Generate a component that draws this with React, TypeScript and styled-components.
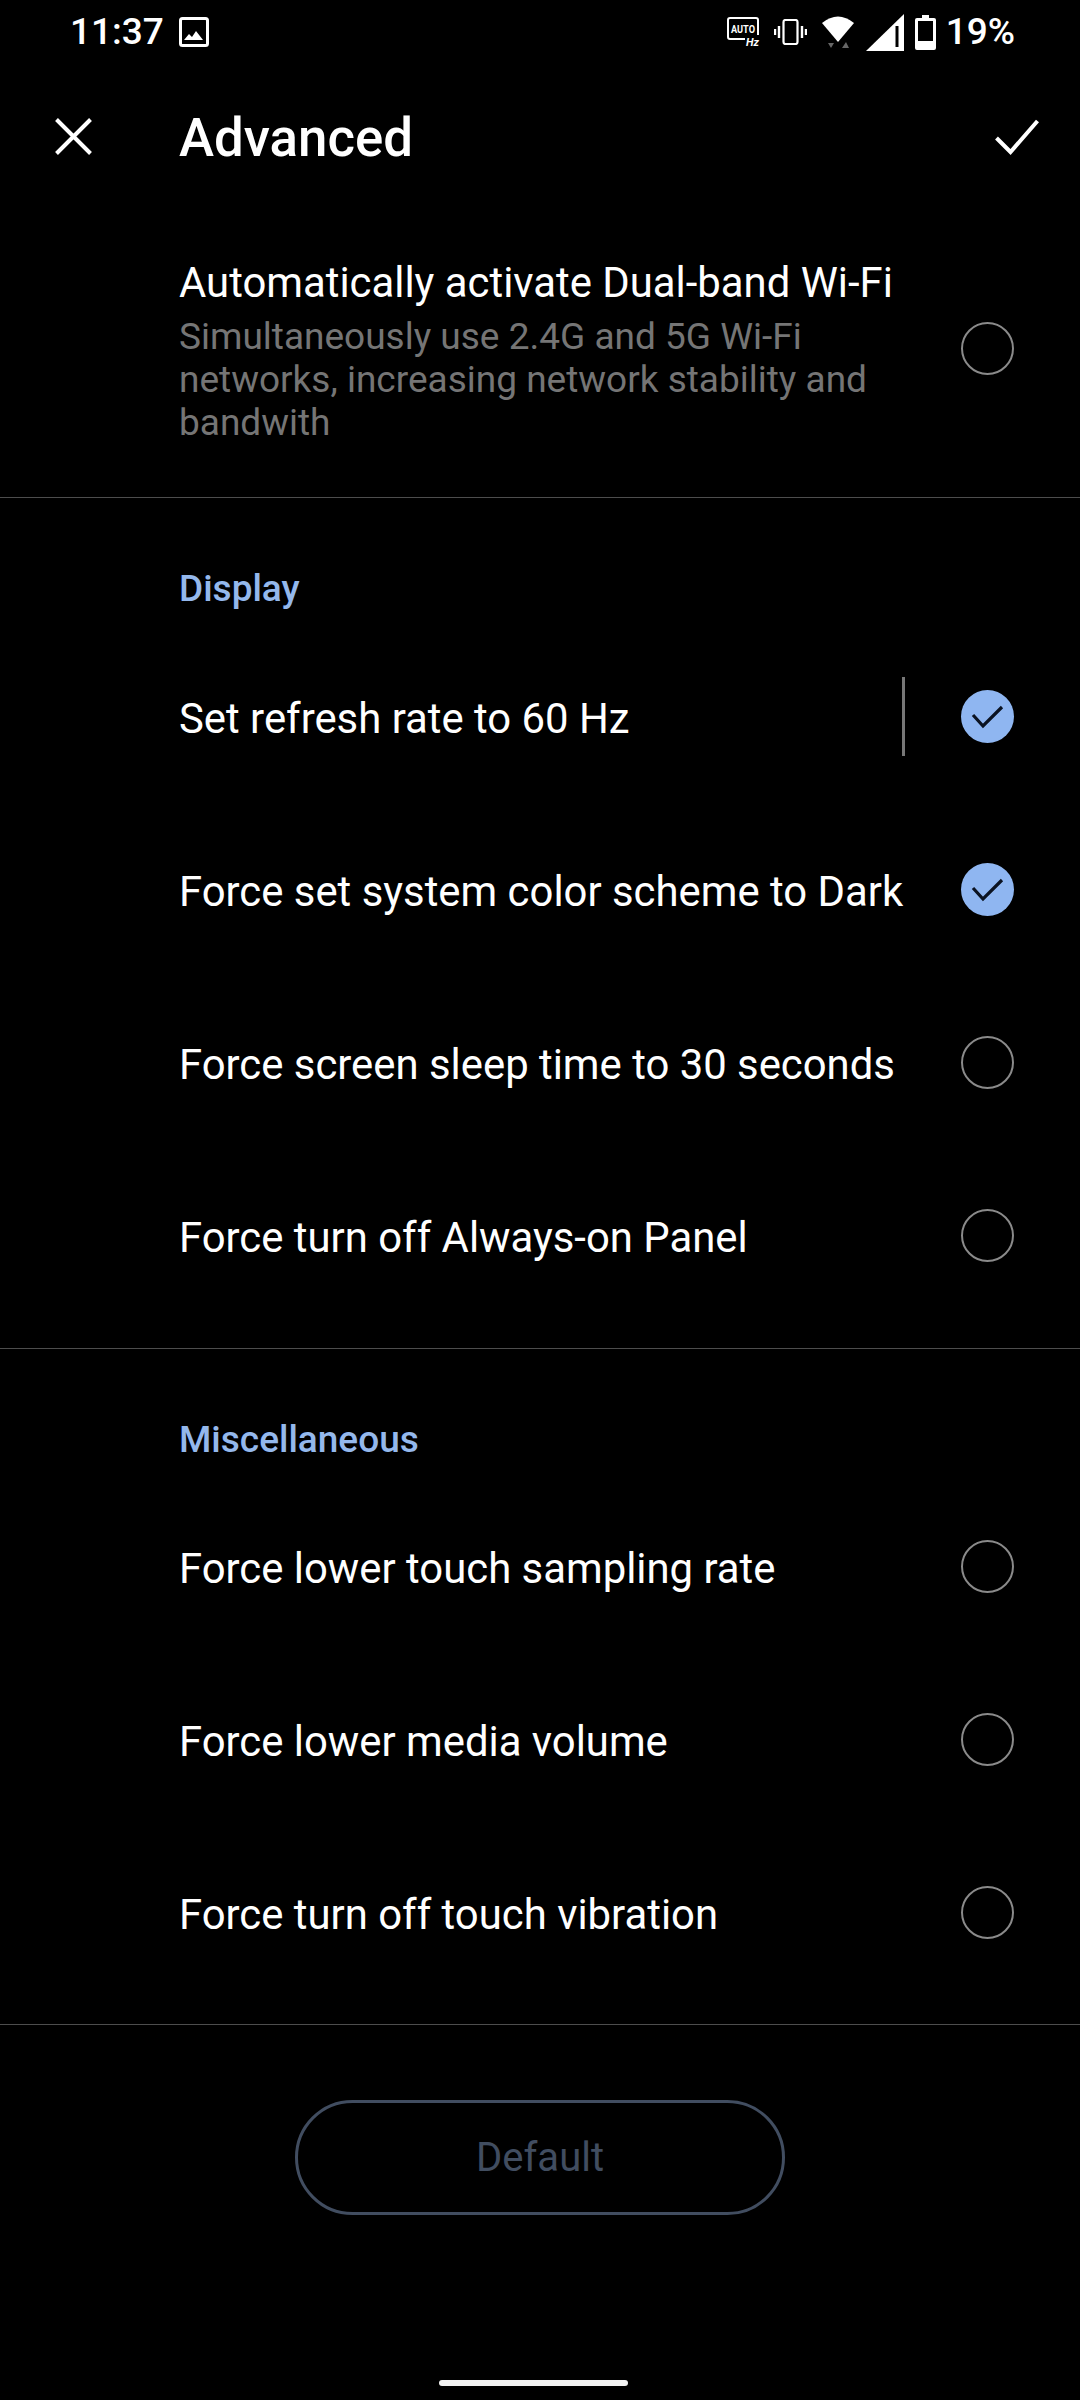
import styled, { createGlobalStyle } from "styled-components";

const GlobalStyle = createGlobalStyle`
  html, body {
    margin: 0;
    padding: 0;
    background: #000;
  }
  * {
    box-sizing: border-box;
  }
`;

const Screen = styled.div`
  width: 1080px;
  height: 2400px;
  background: #000;
  color: #fff;
  font-family: Roboto, "Liberation Sans", sans-serif;
  overflow: hidden;
`;

const StatusBar = styled.div`
  height: 64px;
  padding: 0 65px 0 70px;
  display: flex;
  align-items: center;
  justify-content: space-between;
`;

const StatusGroup = styled.div`
  display: flex;
  align-items: center;
`;

const StatusText = styled.span<{ $left?: number }>`
  margin-left: ${(p) => p.$left ?? 0}px;
  font-size: 37px;
  font-weight: 500;
  line-height: 64px;
`;

const StatusIcon = styled.svg<{ $left: number }>`
  display: block;
  margin-left: ${(p) => p.$left}px;
`;

const Toolbar = styled.div`
  height: 148px;
  display: flex;
  align-items: center;
`;

const ToolbarIcon = styled.svg<{ $left: number; $right?: number }>`
  display: block;
  margin-left: ${(p) => p.$left}px;
  margin-right: ${(p) => p.$right ?? 0}px;
  margin-bottom: 3px;
`;

const Title = styled.h1`
  margin: 0 0 0 87px;
  flex: 1;
  font-size: 52.8px;
  font-weight: 500;
  line-height: 60px;
`;

const FirstOption = styled.div`
  height: 285px;
  padding: 37px 66px 0 179px;
  display: flex;
  align-items: flex-start;
  justify-content: space-between;
`;

const FirstText = styled.div`
  width: 760px;
`;

const OptionTitle = styled.div`
  font-size: 41.85px;
  line-height: 60px;
  padding-top: 4px;
`;

const OptionHint = styled.div`
  margin-top: 2px;
  font-size: 37px;
  line-height: 43px;
  color: #757575;
`;

const Divider = styled.div`
  height: 1px;
  background: #4d4d4d;
`;

const Section = styled.div<{ $height: number }>`
  height: ${(p) => p.$height}px;
`;

const SectionLabel = styled.div<{ $height: number }>`
  height: ${(p) => p.$height}px;
  padding: 70px 0 0 179px;
  font-size: 37px;
  font-weight: 500;
  line-height: 42px;
  color: #94b8ec;
`;

const Row = styled.div`
  height: 173px;
  padding: 0 66px 0 179px;
  display: flex;
  align-items: center;
  justify-content: space-between;
`;

const RowEnd = styled.div`
  display: flex;
  align-items: center;
`;

const RowSeparator = styled.div`
  width: 3px;
  height: 79px;
  margin-right: 56px;
  background: #777;
`;

const Radio = styled.div<{ $checked: boolean }>`
  flex: none;
  width: 53px;
  height: 53px;
  border-radius: 50%;
  border: ${(p) => (p.$checked ? "none" : "2px solid #8a8a8a")};
  background: ${(p) => (p.$checked ? "#8fb6f1" : "transparent")};
  display: flex;
  align-items: center;
  justify-content: center;
`;

const FirstRadio = styled.div`
  margin-top: 73px;
`;

const Footer = styled.div`
  padding: 75px 0 0 295px;
`;

const DefaultButton = styled.div`
  width: 490px;
  height: 115px;
  border: 3px solid #414d60;
  border-radius: 58px;
  display: flex;
  align-items: center;
  justify-content: center;
  font-size: 40px;
  color: #414d60;
`;

const HomeBar = styled.div`
  width: 189px;
  height: 6px;
  margin: 165px 0 0 144px;
  border-radius: 3px;
  background: #f2f2f2;
`;

const Check = () => (
  <svg width="53" height="53" viewBox="0 0 53 53" fill="none">
    <path d="M12 25l10 11 19-19" stroke="#0b1322" strokeWidth="3.2" />
  </svg>
);

const Option = ({
  label,
  checked = false,
  separator = false,
}: {
  label: string;
  checked?: boolean;
  separator?: boolean;
}) => (
  <Row>
    <OptionTitle>{label}</OptionTitle>
    <RowEnd>
      {separator && <RowSeparator />}
      <Radio $checked={checked}>{checked && <Check />}</Radio>
    </RowEnd>
  </Row>
);

export default function App() {
  return (
    <Screen>
      <GlobalStyle />
      <StatusBar>
        <StatusGroup>
          <StatusText>11:37</StatusText>
          <StatusIcon $left={15} width="30" height="30" viewBox="0 0 30 30" fill="none">
            <rect x="1.5" y="1.5" width="27" height="27" rx="2" stroke="#fff" strokeWidth="3" />
            <path d="M5 23l5-6 3 3 4-6 7 9z" fill="#fff" />
          </StatusIcon>
        </StatusGroup>
        <StatusGroup>
          <StatusIcon $left={0} width="34" height="30" viewBox="0 0 34 30" fill="none">
            <path d="M2 20V3a2 2 0 0 1 2-2h26a2 2 0 0 1 2 2v15M2 20a2 2 0 0 0 2 2h15" stroke="#fff" strokeWidth="2" />
            <text x="5" y="16" fill="#fff" fontSize="10" fontWeight="700" textLength="24" lengthAdjust="spacingAndGlyphs" fontFamily="Roboto, sans-serif">AUTO</text>
            <text x="20" y="29" fill="#fff" fontSize="10" fontWeight="700" fontStyle="italic" textLength="13" lengthAdjust="spacingAndGlyphs" fontFamily="Roboto, sans-serif">Hz</text>
          </StatusIcon>
          <StatusIcon $left={14} width="33" height="26" viewBox="0 0 33 26" fill="none">
            <rect x="9.5" y="1" width="14" height="24" rx="2" stroke="#fff" strokeWidth="2.2" />
            <path d="M5 7v12M1 10v6M28 7v12M32 10v6" stroke="#fff" strokeWidth="2.4" />
          </StatusIcon>
          <StatusIcon $left={15} width="32" height="33" viewBox="0 0 32 33" fill="none">
            <path d="M0 7Q16-6 32 7L16 26z" fill="#fff" />
            <path d="M6 27h6l-3 5zM24 26l3 6h-7z" fill="#666" />
          </StatusIcon>
          <StatusIcon $left={12} width="38" height="37" viewBox="0 0 38 37" fill="none">
            <path d="M0 37L38 0v37z" fill="#fff" />
            <path d="M31 12v21" stroke="#000" strokeWidth="3" />
          </StatusIcon>
          <StatusIcon $left={11} width="21" height="35" viewBox="0 0 21 35" fill="none">
            <path d="M7 0h7v3h5a2 2 0 0 1 2 2v28a2 2 0 0 1-2 2H2a2 2 0 0 1-2-2V5a2 2 0 0 1 2-2h5z" fill="#fff" />
            <rect x="3" y="6" width="15" height="20" fill="#000" />
          </StatusIcon>
          <StatusText $left={10}>19%</StatusText>
        </StatusGroup>
      </StatusBar>

      <Toolbar>
        <ToolbarIcon $left={55} width="37" height="37" viewBox="0 0 37 37" fill="none">
          <path d="M1.5 1.5l34 34M35.5 1.5l-34 34" stroke="#fff" strokeWidth="4" />
        </ToolbarIcon>
        <Title>Advanced</Title>
        <ToolbarIcon $left={0} $right={41} width="44" height="36" viewBox="0 0 44 36" fill="none">
          <path d="M1.5 19l14 14L42.5 2" stroke="#fff" strokeWidth="4" />
        </ToolbarIcon>
      </Toolbar>

      <FirstOption>
        <FirstText>
          <OptionTitle>Automatically activate Dual-band Wi-Fi</OptionTitle>
          <OptionHint>
            Simultaneously use 2.4G and 5G Wi-Fi networks, increasing network stability and bandwith
          </OptionHint>
        </FirstText>
        <FirstRadio>
          <Radio $checked={false} />
        </FirstRadio>
      </FirstOption>
      <Divider />

      <Section $height={850}>
        <SectionLabel $height={132}>Display</SectionLabel>
        <Option label="Set refresh rate to 60 Hz" checked separator />
        <Option label="Force set system color scheme to Dark" checked />
        <Option label="Force screen sleep time to 30 seconds" />
        <Option label="Force turn off Always-on Panel" />
      </Section>
      <Divider />

      <Section $height={675}>
        <SectionLabel $height={131}>Miscellaneous</SectionLabel>
        <Option label="Force lower touch sampling rate" />
        <Option label="Force lower media volume" />
        <Option label="Force turn off touch vibration" />
      </Section>
      <Divider />

      <Footer>
        <DefaultButton>Default</DefaultButton>
        <HomeBar />
      </Footer>
    </Screen>
  );
}
